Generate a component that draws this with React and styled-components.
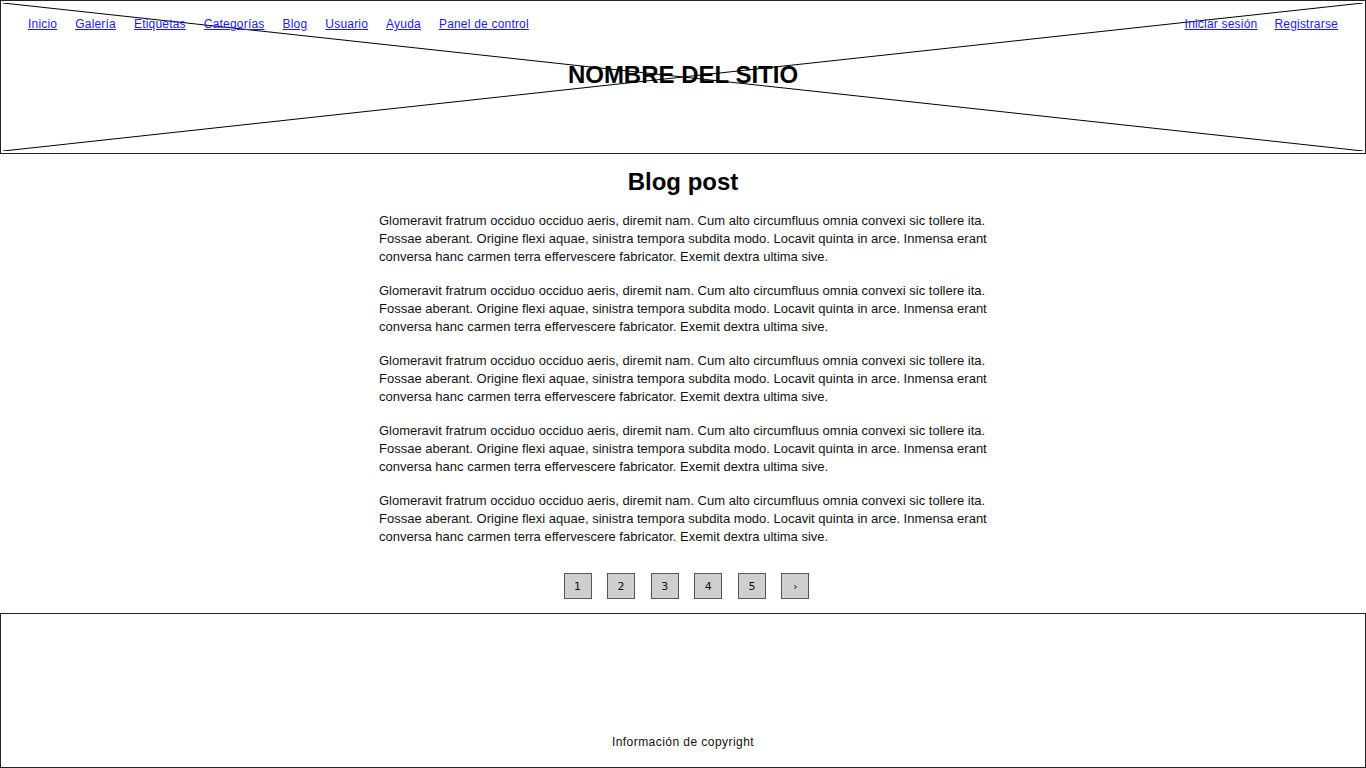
import React from "react";
import styled, { createGlobalStyle } from "styled-components";

const Global = createGlobalStyle`
  html, body { margin: 0; padding: 0; background: #fff; }
  body { font-family: "Liberation Sans", Arial, sans-serif; color: #000; }
  * { box-sizing: border-box; }
`;

const Page = styled.div`
  width: 1366px;
  display: flex;
  flex-direction: column;
`;

const Header = styled.header`
  position: relative;
  height: 154px;
  border: 1px solid #222;
  display: flex;
  flex-direction: column;
`;

const Placeholder = styled.svg`
  position: absolute;
  left: 2px;
  top: 2px;
  width: calc(100% - 4px);
  height: calc(100% - 4px);
  pointer-events: none;
`;

const NavBar = styled.nav`
  position: relative;
  display: flex;
  justify-content: space-between;
  padding: 16px 27px 0 27px;
  height: 31px;
`;

const NavGroup = styled.div`
  display: flex;
  gap: ${(p) => p.$gap}px;
`;

const NavLink = styled.a`
  font-family: "Liberation Sans", Arial, sans-serif;
  font-size: 12px;
  line-height: 15px;
  letter-spacing: 0.2px;
  color: #1a1aff;
  text-decoration: underline;
  cursor: pointer;
`;

const SiteName = styled.h1`
  position: relative;
  margin: 29px 0 0;
  text-align: center;
  font-size: 24px;
  line-height: 28px;
  font-weight: bold;
`;

const Main = styled.main`
  display: flex;
  flex-direction: column;
  align-items: center;
`;

const PostTitle = styled.h2`
  margin: 14px 0 0;
  font-size: 24px;
  line-height: 28px;
  font-weight: bold;
`;

const Article = styled.div`
  width: 612px;
  margin-top: 16px;
  margin-left: 4px;
  display: flex;
  flex-direction: column;
  gap: 16px;
`;

const Para = styled.p`
  margin: 0;
  font-size: 13px;
  line-height: 18px;
  color: #111;
`;

const Pager = styled.div`
  display: flex;
  gap: 15.6px;
  margin-top: 27px;
  margin-left: 7px;
`;

const PageBtn = styled.button`
  width: 28px;
  height: 26px;
  padding: 0;
  background: #cfcfcf;
  border: 1px solid #555;
  font-family: "DejaVu Sans", sans-serif;
  font-size: 11px;
  color: #111;
  display: flex;
  align-items: center;
  justify-content: center;
`;

const Footer = styled.footer`
  margin-top: 14px;
  height: 155px;
  border: 1px solid #222;
  display: flex;
  align-items: flex-end;
  justify-content: center;
  padding-bottom: 17px;
`;

const Copyright = styled.span`
  font-family: "Liberation Sans", Arial, sans-serif;
  font-size: 12px;
  line-height: 15px;
  letter-spacing: 0.45px;
  color: #111;
`;

const text =
  "Glomeravit fratrum occiduo occiduo aeris, diremit nam. Cum alto circumfluus omnia convexi sic tollere ita. Fossae aberant. Origine flexi aquae, sinistra tempora subdita modo. Locavit quinta in arce. Inmensa erant conversa hanc carmen terra effervescere fabricator. Exemit dextra ultima sive.";

const leftLinks = ["Inicio", "Galería", "Etiquetas", "Categorías", "Blog", "Usuario", "Ayuda", "Panel de control"];
const rightLinks = ["Iniciar sesión", "Registrarse"];

export default function App() {
  return (
    <Page>
      <Global />
      <Header>
        <Placeholder viewBox="0 0 1000 100" preserveAspectRatio="none">
          <line x1="0" y1="0" x2="1000" y2="100" stroke="#000" strokeWidth="1" vectorEffect="non-scaling-stroke" />
          <line x1="0" y1="100" x2="1000" y2="0" stroke="#000" strokeWidth="1" vectorEffect="non-scaling-stroke" />
        </Placeholder>
        <NavBar>
          <NavGroup $gap={18}>
            {leftLinks.map((l) => (
              <NavLink key={l}>{l}</NavLink>
            ))}
          </NavGroup>
          <NavGroup $gap={17}>
            {rightLinks.map((l) => (
              <NavLink key={l}>{l}</NavLink>
            ))}
          </NavGroup>
        </NavBar>
        <SiteName>NOMBRE DEL SITIO</SiteName>
      </Header>
      <Main>
        <PostTitle>Blog post</PostTitle>
        <Article>
          {[0, 1, 2, 3, 4].map((i) => (
            <Para key={i}>{text}</Para>
          ))}
        </Article>
        <Pager>
          {["1", "2", "3", "4", "5", "›"].map((p) => (
            <PageBtn key={p}>{p}</PageBtn>
          ))}
        </Pager>
      </Main>
      <Footer>
        <Copyright>Información de copyright</Copyright>
      </Footer>
    </Page>
  );
}
